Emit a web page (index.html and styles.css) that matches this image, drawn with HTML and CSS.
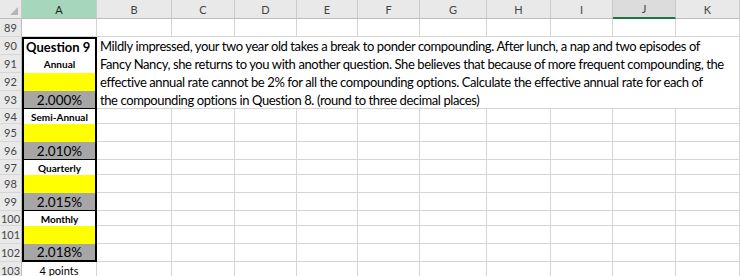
FILE: index.html
```html
<!DOCTYPE html>
<html lang="en">
<head>
  <meta charset="UTF-8">
  <title>Question 9</title>
  <link rel="stylesheet" href="styles.css">
</head>
<body>

  <div class="sheet">
    <!-- column headers -->
    <div class="corner"></div>
    <div class="colhead selected">A</div>
    <div class="colhead">B</div>
    <div class="colhead">C</div>
    <div class="colhead">D</div>
    <div class="colhead">E</div>
    <div class="colhead">F</div>
    <div class="colhead">G</div>
    <div class="colhead">H</div>
    <div class="colhead">I</div>
    <div class="colhead active">J</div>
    <div class="colhead">K</div>

    <!-- 89 -->
    <div class="rowhead">89</div>
    <div class="cell"></div>
    <div class="cell"></div><div class="cell"></div><div class="cell"></div><div class="cell"></div><div class="cell"></div>
    <div class="cell"></div><div class="cell"></div><div class="cell"></div><div class="cell"></div><div class="cell"></div>

    <!-- 90 - 93, question text is merged over B:K -->
    <div class="rowhead">90</div>
    <div class="cell box box-top title">Question 9</div>
    <div class="cell question">
      <span>Mildly impressed, your two year old takes a break to ponder compounding. After lunch, a nap and two episodes of</span>
      <span>Fancy Nancy, she returns to you with another question. She believes that because of more frequent compounding, the</span>
      <span>effective annual rate cannot be 2% for all the compounding options. Calculate the effective annual rate for each of</span>
      <span>the compounding options in Question 8. (round to three decimal places)</span>
    </div>

    <div class="rowhead">91</div>
    <div class="cell box label">Annual</div>

    <div class="rowhead">92</div>
    <div class="cell box yellow"></div>

    <div class="rowhead">93</div>
    <div class="cell box gray group-end">2.000%</div>

    <!-- 94 -->
    <div class="rowhead">94</div>
    <div class="cell box label">Semi-Annual</div>
    <div class="cell"></div><div class="cell"></div><div class="cell"></div><div class="cell"></div><div class="cell"></div>
    <div class="cell"></div><div class="cell"></div><div class="cell"></div><div class="cell"></div><div class="cell"></div>

    <!-- 95 -->
    <div class="rowhead">95</div>
    <div class="cell box yellow"></div>
    <div class="cell"></div><div class="cell"></div><div class="cell"></div><div class="cell"></div><div class="cell"></div>
    <div class="cell"></div><div class="cell"></div><div class="cell"></div><div class="cell"></div><div class="cell"></div>

    <!-- 96 -->
    <div class="rowhead">96</div>
    <div class="cell box gray group-end">2.010%</div>
    <div class="cell"></div><div class="cell"></div><div class="cell"></div><div class="cell"></div><div class="cell"></div>
    <div class="cell"></div><div class="cell"></div><div class="cell"></div><div class="cell"></div><div class="cell"></div>

    <!-- 97 -->
    <div class="rowhead">97</div>
    <div class="cell box label">Quarterly</div>
    <div class="cell"></div><div class="cell"></div><div class="cell"></div><div class="cell"></div><div class="cell"></div>
    <div class="cell"></div><div class="cell"></div><div class="cell"></div><div class="cell"></div><div class="cell"></div>

    <!-- 98 -->
    <div class="rowhead">98</div>
    <div class="cell box yellow"></div>
    <div class="cell"></div><div class="cell"></div><div class="cell"></div><div class="cell"></div><div class="cell"></div>
    <div class="cell"></div><div class="cell"></div><div class="cell"></div><div class="cell"></div><div class="cell"></div>

    <!-- 99 -->
    <div class="rowhead">99</div>
    <div class="cell box gray group-end">2.015%</div>
    <div class="cell"></div><div class="cell"></div><div class="cell"></div><div class="cell"></div><div class="cell"></div>
    <div class="cell"></div><div class="cell"></div><div class="cell"></div><div class="cell"></div><div class="cell"></div>

    <!-- 100 -->
    <div class="rowhead">100</div>
    <div class="cell box label">Monthly</div>
    <div class="cell"></div><div class="cell"></div><div class="cell"></div><div class="cell"></div><div class="cell"></div>
    <div class="cell"></div><div class="cell"></div><div class="cell"></div><div class="cell"></div><div class="cell"></div>

    <!-- 101 -->
    <div class="rowhead">101</div>
    <div class="cell box yellow"></div>
    <div class="cell"></div><div class="cell"></div><div class="cell"></div><div class="cell"></div><div class="cell"></div>
    <div class="cell"></div><div class="cell"></div><div class="cell"></div><div class="cell"></div><div class="cell"></div>

    <!-- 102 -->
    <div class="rowhead">102</div>
    <div class="cell box gray box-bottom">2.018%</div>
    <div class="cell"></div><div class="cell"></div><div class="cell"></div><div class="cell"></div><div class="cell"></div>
    <div class="cell"></div><div class="cell"></div><div class="cell"></div><div class="cell"></div><div class="cell"></div>

    <!-- 103 -->
    <div class="rowhead">103</div>
    <div class="cell note">4 points</div>
    <div class="cell"></div><div class="cell"></div><div class="cell"></div><div class="cell"></div><div class="cell"></div>
    <div class="cell"></div><div class="cell"></div><div class="cell"></div><div class="cell"></div><div class="cell"></div>
  </div>

</body>
</html>
```

FILE: styles.css
```css
* {
  box-sizing: border-box;
}

body {
  margin: 0;
  background: #fff;
  overflow: hidden;
  font-family: Lato, "Liberation Sans", sans-serif;
  color: #000;
}

.sheet {
  display: grid;
  grid-template-columns: 22px 75px 75px 63px 62px 61px 62px 67px 64px 62px 63px 64px;
  grid-template-rows: 19px 18px 18px 18px 18px 18px 15px 18px 18px 15px 18px 18px 15px 18px 18px 18px;
  width: 740px;
}

/* headers */

.corner {
  position: relative;
  background: #e9e9e9;
  border-right: 1px solid #c9c9c9;
  border-bottom: 1px solid #bdbdbd;
}

.corner::after {
  content: "";
  position: absolute;
  right: 3px;
  bottom: 3px;
  border-left: 8px solid transparent;
  border-bottom: 8px solid #b5b5b5;
}

.colhead {
  display: flex;
  align-items: center;
  justify-content: center;
  background: #e9e9e9;
  border-right: 1px solid #c9c9c9;
  border-bottom: 1px solid #bdbdbd;
  font-size: 11px;
  color: #444;
}

.colhead.selected {
  background: #a6d6bb;
  color: #222;
}

.colhead.active {
  background: #dcdcdc;
  border-bottom: 2px solid #217346;
}

.rowhead {
  display: flex;
  align-items: center;
  justify-content: center;
  background: #e9e9e9;
  border-right: 1px solid #bdbdbd;
  border-bottom: 1px solid #d6d6d6;
  font-size: 11px;
  color: #444;
}

/* cells */

.cell {
  display: flex;
  align-items: center;
  justify-content: center;
  border-right: 1px solid #d4d4d4;
  border-bottom: 1px solid #d4d4d4;
  font-size: 13.5px;
  white-space: nowrap;
}

.box {
  border-left: 2px solid #000;
  border-right: 2px solid #000;
  border-bottom: none;
}

.box-top {
  border-top: 2px solid #000;
}

.group-end {
  border-bottom: 1px solid #000;
}

.box-bottom {
  border-bottom: 2px solid #000;
}

.title {
  justify-content: flex-start;
  padding-left: 2px;
  font-size: 13px;
  font-weight: bold;
}

.label {
  font-size: 10px;
  font-weight: bold;
}

.yellow {
  background: #ffff00;
}

.gray {
  background: #a6a6a6;
}

.note {
  font-size: 11px;
}

.question {
  grid-column: span 10;
  grid-row: span 4;
  display: block;
  padding-left: 3px;
  font-size: 13px;
  letter-spacing: -0.4px;
  line-height: 18px;
}

.question span {
  display: block;
}
```
